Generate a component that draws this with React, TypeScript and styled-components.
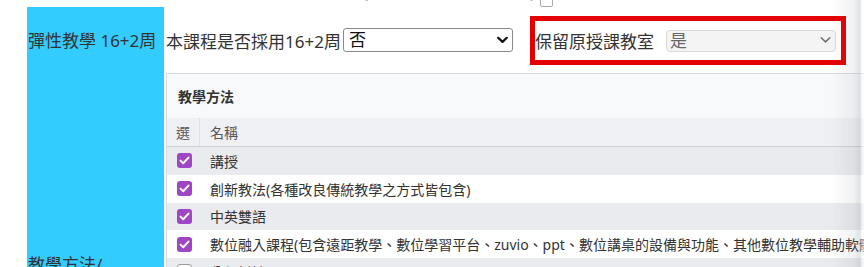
import React from 'react';
import styled, { createGlobalStyle } from 'styled-components';

const Global = createGlobalStyle`
  html, body { margin: 0; padding: 0; background: #fff; overflow: hidden; }
  body { font-family: "Noto Sans", "Noto Sans CJK TC", sans-serif; color: #333; }
`;

const Page = styled.div`
  position: relative;
  width: 864px;
  height: 267px;
  overflow: hidden;
  padding-left: 27px;
  box-sizing: border-box;
`;

const Grid = styled.div`
  display: grid;
  grid-template-columns: 137px 1fr;
  margin-top: -14px;
`;

const SideCell = styled.div<{ $blue?: boolean }>`
  background: ${(p) => (p.$blue ? '#33ccff' : '#fff')};
  display: flex;
  align-items: center;
  padding-left: 1px;
  font-size: 17px;
  line-height: 25px;
  color: #333;
`;

const TopRow = styled.div`
  height: 21px;
  box-sizing: border-box;
  padding: 0 0 6px 12px;
  display: flex;
  align-items: flex-end;
  font-size: 17px;
  line-height: 18px;
  color: #333;
`;

const TinyBox = styled.span`
  display: inline-block;
  width: 11px;
  height: 11px;
  border: 1px solid #aaa;
  border-radius: 2px;
  margin-left: 5px;
  margin-bottom: -6px;
  background: #fff;
`;

const FormRow = styled.div`
  height: 66px;
  display: flex;
  align-items: center;
  padding-left: 2px;
  font-size: 17px;
  color: #333;
`;

const Label = styled.span`
  white-space: nowrap;
  font-size: 17px;
`;

const SelectBox = styled.div<{ $w: number; $h: number; $gap: number }>`
  position: relative;
  width: ${(p) => p.$w}px;
  height: ${(p) => p.$h}px;
  margin-left: ${(p) => p.$gap}px;
  flex: none;
`;

const NativeSelect = styled.select<{ $muted?: boolean }>`
  appearance: none;
  -webkit-appearance: none;
  width: 100%;
  height: 100%;
  box-sizing: border-box;
  font-family: inherit;
  font-size: 17px;
  line-height: 20px;
  border: 1px solid ${(p) => (p.$muted ? '#dadada' : '#8a8a8a')};
  border-radius: ${(p) => (p.$muted ? 4 : 3)}px;
  background: ${(p) => (p.$muted ? '#f4f4f4' : '#fff')};
  color: ${(p) => (p.$muted ? '#666' : '#111')};
  padding: 0 0 0 ${(p) => (p.$muted ? 3 : 5)}px;
  outline: none;
`;

const Chevron = styled.svg`
  position: absolute;
  right: 5px;
  top: 50%;
  transform: translateY(-50%);
  pointer-events: none;
`;

const Highlight = styled.div`
  margin-left: 17px;
  width: 316px;
  height: 49px;
  box-sizing: border-box;
  border: 5px solid #e40000;
  display: flex;
  align-items: center;
`;

const Panel = styled.div`
  border: 1px solid #d6dbe1;
  border-right: none;
  margin-left: 2px;
  background: #fff;
`;

const PanelHead = styled.div`
  height: 44px;
  display: flex;
  align-items: center;
  padding-left: 11px;
  background: #f8f9fb;
  font-size: 14px;
  font-weight: 700;
  color: #333;
`;

const Row = styled.div<{ $tone: 'head' | 'grey' | 'white' }>`
  display: grid;
  grid-template-columns: 33px 1fr;
  height: ${(p) => (p.$tone === 'head' ? '29px' : '27.75px')};
  background: ${(p) => (p.$tone === 'head' ? '#eef0f4' : p.$tone === 'grey' ? '#e9ebee' : '#fff')};
  ${(p) => (p.$tone === 'head' ? 'border-bottom: 1px solid #cdd2d8; box-sizing: border-box;' : '')}
  font-size: 14px;
  color: ${(p) => (p.$tone === 'head' ? '#555' : '#333')};
  white-space: nowrap;
`;

const Cell = styled.div<{ $first?: boolean; $divider?: boolean }>`
  display: flex;
  align-items: center;
  ${(p) => (p.$first ? 'justify-content: center;' : 'padding-left: 10px;')}
  ${(p) => (p.$divider ? 'border-right: 1px solid #dfe3e8;' : '')}
  overflow: hidden;
`;

const Check = styled.span<{ $on: boolean }>`
  width: 15px;
  height: 15px;
  box-sizing: border-box;
  border-radius: 3px;
  background: ${(p) => (p.$on ? '#a046c4' : '#fff')};
  border: ${(p) => (p.$on ? 'none' : '1px solid #9a9a9a')};
  display: inline-flex;
  align-items: center;
  justify-content: center;
  margin-left: 2px;
`;

const EdgeShade = styled.div`
  position: absolute;
  top: 0;
  right: 0;
  width: 34px;
  height: 100%;
  pointer-events: none;
  background: linear-gradient(
    to right,
    rgba(120, 125, 135, 0) 0%,
    rgba(120, 125, 135, 0.1) 70%,
    rgba(120, 125, 135, 0.22) 88%,
    rgba(255, 255, 255, 0.4) 94%,
    rgba(255, 255, 255, 0.6) 100%
  );
`;

const methods = [
  { name: '講授', on: true },
  { name: '創新教法(各種改良傳統教學之方式皆包含)', on: true },
  { name: '中英雙語', on: true },
  {
    name: '數位融入課程(包含遠距教學、數位學習平台、zuvio、ppt、數位講桌的設備與功能、其他數位教學輔助軟體等)',
    on: true,
  },
  { name: '分組討論', on: false },
  { name: '個案研究', on: false },
  { name: '專題實作', on: false },
  { name: '實驗實習', on: false },
  { name: '業界協同教學', on: false },
  { name: '翻轉教學', on: false },
  { name: '問題導向學習(PBL)', on: false },
  { name: '校外參訪', on: false },
];

function Select({ value, w, h, gap, muted }: { value: string; w: number; h: number; gap: number; muted?: boolean }) {
  return (
    <SelectBox $w={w} $h={h} $gap={gap}>
      <NativeSelect $muted={muted} defaultValue={value}>
        <option value="否">否</option>
        <option value="是">是</option>
      </NativeSelect>
      <Chevron width="11" height="7" viewBox="0 0 11 7">
        <path
          d="M1.2 1.2 L5.5 5.4 L9.8 1.2"
          fill="none"
          stroke={muted ? '#6e6e6e' : '#111'}
          strokeWidth={muted ? 1.5 : 2.2}
          strokeLinecap="round"
          strokeLinejoin="round"
        />
      </Chevron>
    </SelectBox>
  );
}

export default function App() {
  return (
    <>
      <Global />
      <Page>
        <Grid>
          <SideCell />
          <TopRow>
            <Label>本課程是否開放校際選修(含跨校選修, 推廣學分)</Label>
            <TinyBox />
          </TopRow>

          <SideCell $blue>彈性教學 16+2周</SideCell>
          <FormRow>
            <Label>本課程是否採用16+2周</Label>
            <Select value="否" w={170} h={24} gap={2} />
            <Highlight>
              <Label>保留原授課教室</Label>
              <Select value="是" w={170} h={22} gap={12} muted />
            </Highlight>
          </FormRow>

          <SideCell $blue>
            教學方法/
            <br />
            評量方式
          </SideCell>
          <Panel>
            <PanelHead>教學方法</PanelHead>
            <Row $tone="head">
              <Cell $first $divider>選</Cell>
              <Cell>名稱</Cell>
            </Row>
            {methods.map((m, i) => (
              <Row key={m.name} $tone={i % 2 === 0 ? 'grey' : 'white'}>
                <Cell $first>
                  <Check $on={m.on}>
                    {m.on && (
                      <svg width="11" height="9" viewBox="0 0 11 9">
                        <path d="M1.5 4.6 L4.2 7.2 L9.5 1.6" fill="none" stroke="#fff" strokeWidth="2" strokeLinecap="round" strokeLinejoin="round" />
                      </svg>
                    )}
                  </Check>
                </Cell>
                <Cell>{m.name}</Cell>
              </Row>
            ))}
          </Panel>
        </Grid>
        <EdgeShade />
      </Page>
    </>
  );
}
